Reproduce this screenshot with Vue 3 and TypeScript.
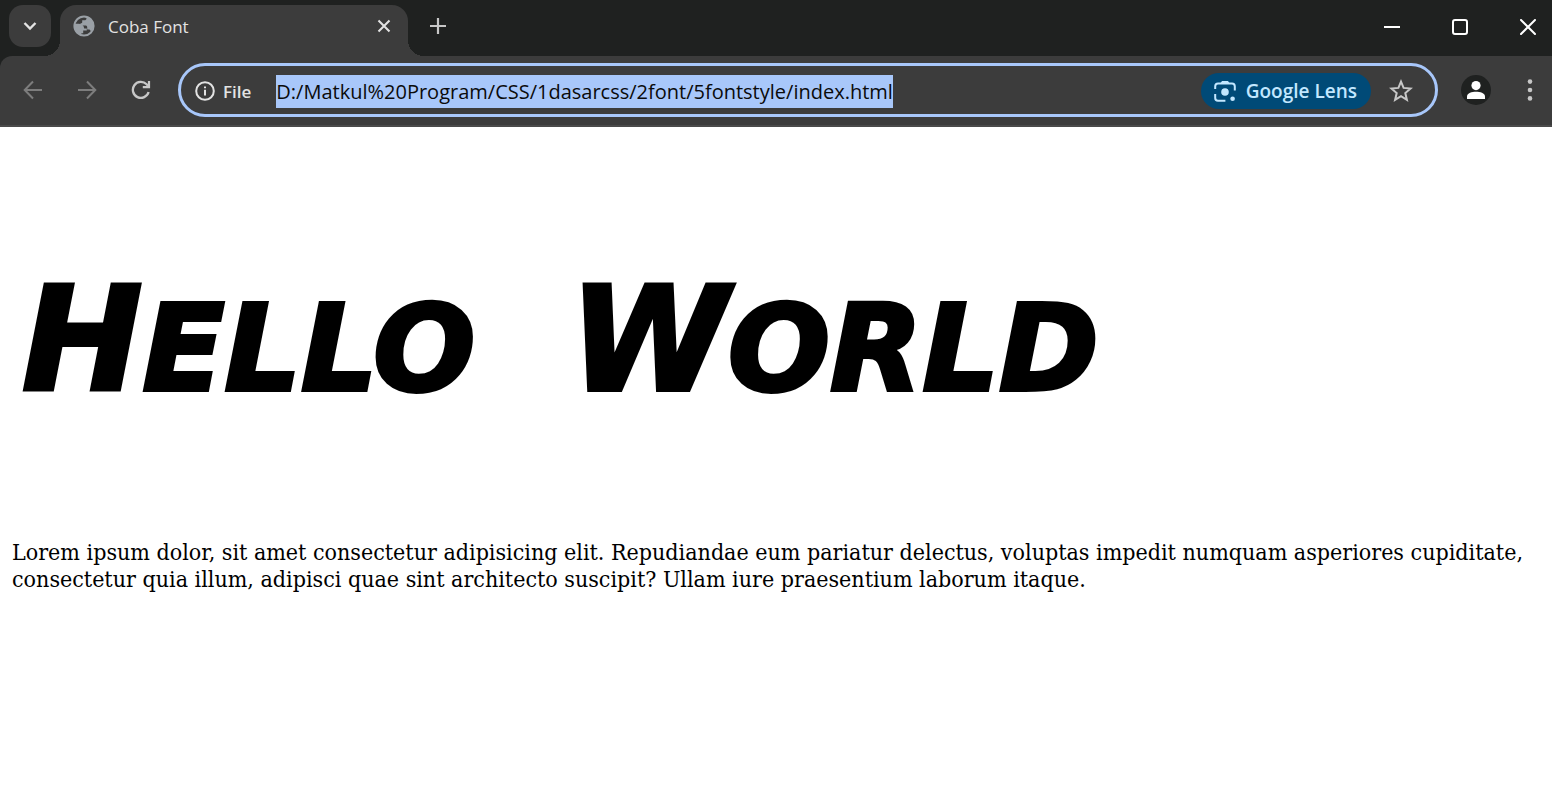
<script setup lang="ts">
import { ref } from 'vue'

const address = ref('D:/Matkul%20Program/CSS/1dasarcss/2font/5fontstyle/index.html')
const headingWords = ['Hello', 'World']
</script>

<template>
  <div class="browser">
    <header class="tab-strip">
      <button class="tab-search" type="button" aria-label="Search tabs">
        <svg width="14" height="10" viewBox="0 0 14 10"><path d="M1.5 2 7 7.5 12.5 2" fill="none" stroke="currentColor" stroke-width="2.4" /></svg>
      </button>
      <div class="tab">
        <svg class="globe" width="22" height="22" viewBox="0 0 22 22">
          <circle cx="11" cy="11" r="9.6" fill="none" stroke="currentColor" stroke-width="2" />
          <path d="M13.5 1.8V3.2C13.5 4.6 12.6 5.2 11.2 5.2H9.2V7.2C9.2 8 8.6 8.4 7.4 8.4V10.4H12.4C13.4 10.4 14.2 11 14.2 12.2V14.4H15.6C16.8 14.4 17.4 15 17.8 16.2C21 13 21.4 9 19.4 5.8C18 3.6 16 2.2 13.5 1.8Z" fill="currentColor" />
          <path d="M1.5 9.2 6.4 13.2V14.4C6.4 15.4 7.2 16.2 8.4 16.2V20.2C4 19.4 0.6 14.6 1.5 9.2ZM1.6 8.8H5.4C8.6 8.8 10.8 10.2 11.2 13.4H13.8V15.4H10.2V18.2H8.4L3.4 15Z" fill="currentColor" />
        </svg>
        <span class="tab-title">Coba Font</span>
        <button class="icon-button close-tab" type="button" aria-label="Close tab">
          <svg width="14" height="14" viewBox="0 0 14 14"><path d="M1.5 1.5 12.5 12.5M12.5 1.5 1.5 12.5" stroke="currentColor" stroke-width="2.1" /></svg>
        </button>
      </div>
      <button class="icon-button new-tab" type="button" aria-label="New tab">
        <svg width="16" height="16" viewBox="0 0 16 16"><path d="M8 0V16M0 8H16" stroke="currentColor" stroke-width="2.2" /></svg>
      </button>
      <div class="window-controls">
        <button class="icon-button" type="button" aria-label="Minimize">
          <svg width="16" height="16" viewBox="0 0 16 16"><path d="M0 8H16" stroke="currentColor" stroke-width="2" /></svg>
        </button>
        <button class="icon-button" type="button" aria-label="Maximize">
          <svg width="16" height="16" viewBox="0 0 16 16"><rect x="1" y="1" width="14" height="14" rx="2" fill="none" stroke="currentColor" stroke-width="2" /></svg>
        </button>
        <button class="icon-button" type="button" aria-label="Close">
          <svg width="16" height="16" viewBox="0 0 16 16"><path d="M1 1 15 15M15 1 1 15" stroke="currentColor" stroke-width="2" stroke-linecap="round" /></svg>
        </button>
      </div>
    </header>

    <nav class="toolbar">
      <button class="icon-button nav-button muted" type="button" aria-label="Back">
        <svg width="20" height="20" viewBox="0 0 20 20"><path d="M19 10H2M10 1.5 1.7 10 10 18.5" fill="none" stroke="currentColor" stroke-width="2" /></svg>
      </button>
      <button class="icon-button nav-button muted" type="button" aria-label="Forward">
        <svg width="20" height="20" viewBox="0 0 20 20"><path d="M1 10H18M10 1.5 18.3 10 10 18.5" fill="none" stroke="currentColor" stroke-width="2" /></svg>
      </button>
      <button class="icon-button nav-button" type="button" aria-label="Reload">
        <svg width="20" height="20" viewBox="0 0 20 20">
          <path d="M17.6 12A8 8 0 1 1 15.6 4.3L17 5.8" fill="none" stroke="currentColor" stroke-width="2.3" />
          <path d="M18 1V7.2H11.8" fill="none" stroke="currentColor" stroke-width="2.2" />
        </svg>
      </button>
      <div class="omnibox">
        <button class="site-info" type="button">
          <svg width="20" height="20" viewBox="0 0 20 20">
            <circle cx="10" cy="10" r="8.8" fill="none" stroke="currentColor" stroke-width="2" />
            <path d="M10 8.8V14.4M10 5.4V7.3" stroke="currentColor" stroke-width="2" />
          </svg>
          <span>File</span>
        </button>
        <div class="address-area">
          <input v-model="address" class="address" type="text" aria-label="Address" spellcheck="false" />
        </div>
        <button class="lens" type="button">
          <svg width="22" height="22" viewBox="0 0 22 22">
            <path d="M1.2 9V6.4Q1.2 3.6 4 3.6H18Q20.8 3.6 20.8 6.4V10.4M1.2 14V18Q1.2 20.8 4 20.8H11.4" fill="none" stroke="currentColor" stroke-width="2" />
            <path d="M6 4 8 1H14L16 4Z" fill="currentColor" />
            <circle cx="11" cy="12" r="3.8" fill="currentColor" />
            <circle cx="18.6" cy="18.8" r="2.3" fill="currentColor" />
          </svg>
          <span>Google Lens</span>
        </button>
        <button class="icon-button star" type="button" aria-label="Bookmark this tab">
          <svg width="24" height="24" viewBox="0 0 24 24"><path d="M12 2.6 14.6 8.9 21.6 9.5 16.3 14 17.9 20.9 12 17.2 6.1 20.9 7.7 14 2.4 9.5 9.4 8.9Z" fill="none" stroke="currentColor" stroke-width="2" /></svg>
        </button>
      </div>
      <button class="icon-button profile" type="button" aria-label="Profile">
        <svg width="30" height="30" viewBox="0 0 30 30">
          <circle cx="15" cy="15" r="15" fill="#1f2120" />
          <circle cx="15" cy="10.6" r="4.6" fill="#fff" />
          <path d="M6 24V21.5C6 18 11 16.8 15 16.8S24 18 24 21.5V24Z" fill="#fff" />
        </svg>
      </button>
      <button class="icon-button menu" type="button" aria-label="Menu">
        <svg width="6" height="22" viewBox="0 0 6 22"><g fill="currentColor"><circle cx="3" cy="2.6" r="2.3" /><circle cx="3" cy="11" r="2.3" /><circle cx="3" cy="19.4" r="2.3" /></g></svg>
      </button>
    </nav>

    <main class="page">
      <h1><span v-for="word in headingWords" :key="word" class="word">{{ word }}</span></h1>
      <p>
        Lorem ipsum dolor, sit amet consectetur adipisicing elit. Repudiandae eum pariatur delectus, voluptas impedit
        numquam asperiores cupiditate, consectetur quia illum, adipisci quae sint architecto suscipit? Ullam iure
        praesentium laborum itaque.
      </p>
    </main>
  </div>
</template>

<style>
body {
  margin: 0;
  background: #fff;
}
</style>

<style scoped>
.browser {
  background: #1f2120;
  color: #e3e3e3;
  font-family: "Open Sans", "Noto Sans", sans-serif;
}

svg {
  display: block;
  flex: none;
}

button {
  margin: 0;
  padding: 0;
  border: 0;
  background: none;
  color: inherit;
  font: inherit;
}

.icon-button {
  display: flex;
  align-items: center;
  justify-content: center;
}

.tab-strip {
  display: flex;
  height: 56px;
}

.tab-search {
  display: flex;
  align-items: center;
  justify-content: center;
  width: 42px;
  height: 42px;
  margin: 5px 9px 0;
  border-radius: 14px;
  background: #3c3c3c;
}

.tab {
  position: relative;
  display: flex;
  align-items: center;
  box-sizing: border-box;
  width: 348px;
  margin-top: 5px;
  padding: 0 17px 9px 13px;
  border-radius: 16px 16px 0 0;
  background: #3c3c3c;
}

.tab::before,
.tab::after {
  content: "";
  position: absolute;
  bottom: 0;
  width: 16px;
  height: 16px;
}

.tab::before {
  right: 100%;
  background: radial-gradient(circle at 0 0, transparent 16px, #3c3c3c 16px);
}

.tab::after {
  left: 100%;
  background: radial-gradient(circle at 100% 0, transparent 16px, #3c3c3c 16px);
}

.globe {
  color: #9aa0a6;
}

.tab-title {
  flex: 1;
  margin-left: 13px;
  padding-top: 2px;
  font-size: 17px;
  line-height: 24px;
}

.new-tab {
  width: 60px;
  height: 52px;
  color: #c7c7c7;
}

.window-controls {
  display: flex;
  height: 54px;
  margin-left: auto;
  color: #fff;
}

.window-controls button {
  width: 68px;
}

.window-controls button:last-child {
  width: 48px;
  margin-left: 10px;
}

.toolbar {
  display: flex;
  align-items: center;
  box-sizing: border-box;
  height: 71px;
  padding: 0 10px 1px 6px;
  border-bottom: 2px solid #4a4a4a;
  border-radius: 12px 0 0;
  background: #3c3c3c;
}

.nav-button {
  width: 54px;
  height: 54px;
  color: #c7c7c7;
}

.muted {
  color: #7d7d7d;
}

.omnibox {
  display: flex;
  flex: 1;
  align-items: center;
  box-sizing: border-box;
  height: 54px;
  margin-left: 10px;
  padding: 2px 22px 0 14px;
  border: 3px solid #a8c7fa;
  border-radius: 27px;
}

.site-info {
  display: flex;
  align-items: center;
  gap: 8px;
  font-size: 17px;
  font-weight: 600;
}

.address-area {
  display: flex;
  flex: 1;
  min-width: 0;
  margin-left: 25px;
}

.address {
  field-sizing: content;
  box-sizing: border-box;
  max-width: 100%;
  height: 33px;
  padding: 0;
  border: 0;
  outline: 0;
  background: #a8c7fa;
  color: #0b0b0b;
  font-family: inherit;
  font-size: 20px;
}

.lens {
  display: flex;
  align-items: center;
  gap: 10px;
  height: 36px;
  padding: 0 14px 0 13px;
  border-radius: 18px;
  background: #004a77;
  color: #c2e7ff;
  font-size: 19px;
  font-weight: 600;
  white-space: nowrap;
}

.star {
  margin-left: 18px;
  color: #c7c7c7;
}

.profile {
  margin-left: 23px;
}

.menu {
  width: 24px;
  height: 54px;
  margin-left: 27px;
  color: #c7c7c7;
}

.page {
  display: flow-root;
  padding: 0 12px;
  background: #fff;
  color: #000;
}

h1 {
  display: flex;
  flex-wrap: wrap;
  gap: 0 94px;
  margin: 107px 0 84px;
  padding-left: 10px;
  font-family: "Arial Black", "DejaVu Sans", sans-serif;
  font-size: 120px;
  font-style: italic;
  font-weight: 900;
  line-height: 212px;
  text-transform: uppercase;
  -webkit-text-stroke: 4px #000;
}

.word {
  display: block;
}

.word::first-letter {
  font-size: 144px;
}

p {
  margin: 0;
  font-family: Georgia, "DejaVu Serif Condensed", "DejaVu Serif", serif;
  font-size: 23px;
  line-height: 27px;
}
</style>
